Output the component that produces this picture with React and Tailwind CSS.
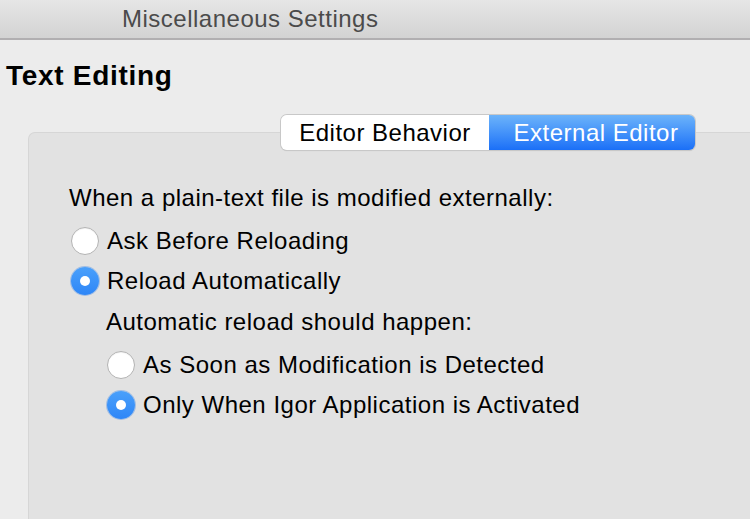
const Radio = ({ checked, label }) => (
  <div className="flex h-10 items-center gap-2">
    {checked ? (
      <span className="flex h-[28px] w-[28px] items-center justify-center rounded-full bg-gradient-to-b from-[#4aa0fb] to-[#2e86f7] shadow-[0_0_0_1px_rgba(40,120,230,0.35)]">
        <span className="h-[10px] w-[10px] rounded-full bg-white" />
      </span>
    ) : (
      <span className="h-[28px] w-[28px] rounded-full border border-[#b3b3b3] bg-white shadow-[inset_0_1px_1px_rgba(0,0,0,0.05)]" />
    )}
    <span>{label}</span>
  </div>
);

export default function App() {
  return (
    <div
      className="h-[519px] w-[750px] overflow-hidden bg-[#ececec] text-[24px] tracking-[0.5px] text-black"
      style={{ fontFamily: '"Liberation Sans", Arial, sans-serif' }}
    >
      <div className="flex h-[40px] items-center border-b-2 border-[#b1afb1] bg-gradient-to-b from-[#e6e6e6] to-[#d3d3d3] pl-[122px]">
        <span className="text-[24px] text-[#4b4b4b]">Miscellaneous Settings</span>
      </div>

      <h1 className="mt-[19px] pl-[6px] text-[28px] font-bold leading-[34px] tracking-[0.7px]">Text Editing</h1>

      <div className="relative ml-[28px] mt-[39px] h-[400px] rounded-tl-[7px] border-l border-t border-[#d6d6d6] bg-[#e2e2e2] pl-[40px] pt-[47px]">
        <div className="absolute left-[252px] top-[-18px] flex h-[35px] overflow-hidden rounded-[6px] shadow-[0_0_0_1px_#c8c8c8,0_1px_1px_rgba(0,0,0,0.15)]">
          <div className="flex w-[208px] items-center justify-center bg-white">Editor Behavior</div>
          <div className="flex w-[206px] items-center justify-center bg-gradient-to-b from-[#6cb3fa] to-[#1a6ff7] pl-[8px] text-white">
            External Editor
          </div>
        </div>

        <p className="mb-[5px] leading-[36px]">When a plain-text file is modified externally:</p>
        <div className="pl-[2px]">
          <Radio label="Ask Before Reloading" />
          <Radio checked label="Reload Automatically" />
        </div>
        <div className="pl-[37px]">
          <p className="mb-[2px] leading-[42px]">Automatic reload should happen:</p>
          <div className="pl-[1px]">
            <Radio label="As Soon as Modification is Detected" />
            <Radio checked label="Only When Igor Application is Activated" />
          </div>
        </div>
      </div>
    </div>
  );
}
